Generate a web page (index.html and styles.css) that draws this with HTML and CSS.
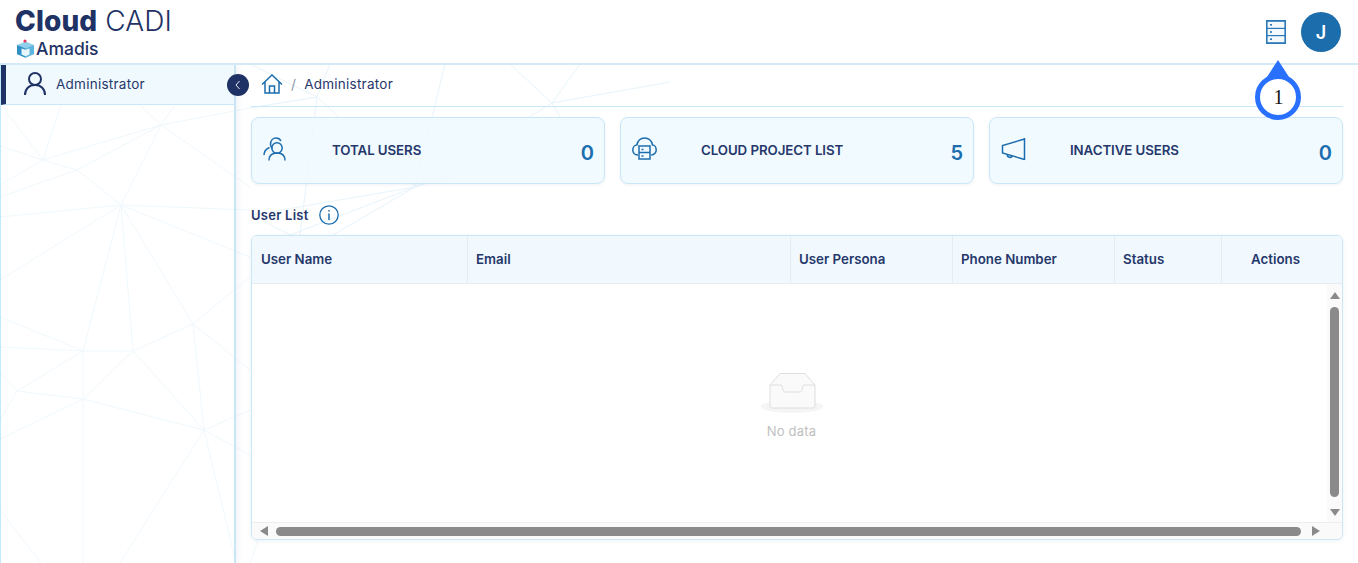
FILE: index.html
```html
<!DOCTYPE html>
<html lang="en">
<head>
<meta charset="utf-8">
<title>Cloud CADI</title>
<link rel="stylesheet" href="styles.css">
</head>
<body>
<svg class="mesh" width="1358" height="563" viewBox="0 0 1358 563" aria-hidden="true">
  <path d="M61 105L43 160L3 107M43 160L161 125L77 170L43 160M77 170L0 197M43 160L0 185M43 160L0 146M161 125L250 108L317 97M161 125L175 105M161 125L140 105M161 125L121 205L77 170M121 205L0 217M121 205L0 280M121 205L83 351M121 205L133 351M121 205L193 324M121 205L250 210M121 205L250 257M161 125L250 187M83 351L133 351L193 324L250 277M83 351L0 317M83 351L0 347M83 351L17 391L83 399L83 563M83 351L83 399L133 351L204 430L193 324M83 399L204 430L120 563M83 399L0 439M17 391L0 372M17 391L0 420M0 510L41 563M204 430L236 563M204 430L250 455M204 430L250 410M193 324L250 370M258 540L250 563"/>
  <path class="mesh-main" d="M317 97L330 64M317 97L250 108M317 97L415 187M317 97L300 235M415 187L445 64M415 187L552 103L580 64M552 103L510 64M552 103L670 82M552 103L573 138L415 187M415 187L252 215M415 187L333 235M415 187L290 235M290 235L252 215M317 97L250 64"/>
</svg>

<header class="topbar">
  <div class="brand">
    <div class="brand-name"><b>Cloud</b> CADI</div>
    <div class="brand-sub">
      <svg width="19" height="19" viewBox="0 0 19 19"><path d="M9.500 2.500L18 6v9l-8.500 3.800L1 15V6z" fill="#8fd0ea"/><path d="M1 6l8.500 3.500v9.300L1 15z" fill="#2d8fc4"/><path d="M18 6L9.500 9.500v9.300L18 15z" fill="#5fb5dd"/><path d="M5.500 9.500v6l4 1.800v-6.500zM13.500 9.500v6l-4 1.800v-6.500z" fill="#e6f6fc"/><circle cx="9" cy="2" r="1.600" fill="#e8345f"/></svg>
      <span>Amadis</span>
    </div>
  </div>
  <div class="top-actions">
    <svg class="server" width="20" height="24" viewBox="0 0 20 24"><rect width="20" height="24" fill="#2a78b8"/><rect x="1.600" y="1.800" width="16.800" height="6" fill="#f3f9fd"/><rect x="1.600" y="9" width="16.800" height="6" fill="#f3f9fd"/><rect x="1.600" y="16.200" width="16.800" height="6" fill="#f3f9fd"/><rect x="4" y="4" width="2" height="1.600" fill="#2a78b8"/><rect x="4" y="11.200" width="2" height="1.600" fill="#2a78b8"/><rect x="4" y="18.400" width="2" height="1.600" fill="#2a78b8"/></svg>
    <div class="avatar">J</div>
  </div>
</header>

<div class="shell">
  <aside class="sidebar">
    <div class="side-item">
      <svg width="24" height="25" viewBox="0 0 24 25" fill="none" stroke="#1f3265" stroke-width="2"><circle cx="12" cy="8" r="6"/><path d="M2 24c0-6 4-10 10-10s10 4 10 10"/></svg>
      <span>Administrator</span>
    </div>
    <div class="collapse"><svg width="8" height="10" viewBox="0 0 8 10" fill="none" stroke="#fff" stroke-width=".9"><path d="M5.500 1L2 5l3.500 4"/></svg></div>
  </aside>

  <main class="main">
    <nav class="crumbs">
      <svg width="22" height="20" viewBox="0 0 22 20" fill="none" stroke="#1c6dae" stroke-width="1.500"><path d="M1 10.500L11 1l10 9.500M4 8v11h14V8M8.500 19v-7h5v7"/></svg>
      <span class="sep">/</span>
      <span>Administrator</span>
    </nav>

    <section class="cards">
      <div class="card">
        <svg width="25" height="24" viewBox="0 0 25 24" fill="none" stroke="#1c6dae" stroke-width="1.500"><circle cx="14" cy="11" r="5.200"/><path d="M6 23.500c0-5 3-7.500 8-7.500s8 2.500 8 7.500M7.500 7.500C7.500 3.500 10 1 13 1c2 0 4 1 5 3M7.500 7.500c0 2 1 3 2 4M1 18c0-4 2-6 5.500-7.500"/></svg>
        <span class="card-title">TOTAL USERS</span>
        <span class="card-value">0</span>
      </div>
      <div class="card">
        <svg width="25" height="24" viewBox="0 0 25 24" fill="none" stroke="#1c6dae" stroke-width="1.500"><path d="M6 18C2 18 .8 15 .8 13c0-3 2-5 4-5C6 3 9 1 12.500 1s7 2 8 7c2 0 3.700 2 3.700 5 0 2-1.500 5-5 5"/><rect x="7" y="9" width="11" height="13"/><path d="M7 15.500h11M9.500 12.500h2M9.500 19h2"/></svg>
        <span class="card-title">CLOUD PROJECT LIST</span>
        <span class="card-value">5</span>
      </div>
      <div class="card">
        <svg width="25" height="24" viewBox="0 0 25 24" fill="none" stroke="#1c6dae" stroke-width="1.500"><path d="M23.500 1v22M23.500 2L1.500 8.500V16l22 6.500M6 17.500a3 3 0 0 0 5.500 1.500"/></svg>
        <span class="card-title">INACTIVE USERS</span>
        <span class="card-value">0</span>
      </div>
    </section>

    <div class="list-head">
      <span>User List</span>
      <svg width="20" height="20" viewBox="0 0 20 20" fill="none" stroke="#1c6dae" stroke-width="1.300"><circle cx="10" cy="10" r="9.200"/><path d="M10 8.500v6.500" stroke-width="1.500"/><path d="M10 5v1.600" stroke-width="1.500"/></svg>
    </div>

    <section class="table">
      <div class="thead">
        <div class="th">User Name</div>
        <div class="th">Email</div>
        <div class="th">User Persona</div>
        <div class="th">Phone Number</div>
        <div class="th">Status</div>
        <div class="th th-last">Actions</div>
      </div>
      <div class="tbody">
        <div class="empty">
          <svg width="64" height="41" viewBox="0 0 64 41"><ellipse cx="32" cy="33.500" rx="31" ry="6.500" fill="#f5f5f5"/><path d="M10 12L20 .5h25L55 12v21a2 2 0 0 1-2 2H12a2 2 0 0 1-2-2z" fill="#fafafa" stroke="#dedede"/><path d="M10 12h11c2 0 1 7 4 7h15c3 0 2-7 4-7h11" fill="none" stroke="#dedede"/></svg>
          <span>No data</span>
        </div>
        <div class="vbar">
          <i class="arrow up"></i>
          <i class="vthumb"></i>
          <i class="arrow down"></i>
        </div>
      </div>
      <div class="hbar">
        <i class="arrow left"></i>
        <i class="hthumb"></i>
        <i class="arrow right"></i>
      </div>
    </section>
  </main>
</div>

<div class="marker"><span>1</span></div>
</body>
</html>
```
FILE: styles.css
```css
* { box-sizing: border-box; }
html, body { margin: 0; height: 563px; overflow: hidden; background: #fff; }
body { font-family: Inter, "Noto Sans", sans-serif; color: #26386b; position: relative; display: flex; flex-direction: column; }

.mesh { position: absolute; left: 0; top: 0; z-index: 0; fill: none; stroke: #eff8fd; stroke-width: 1; }
.mesh-main { stroke: #e7f4fb; }

.topbar { position: relative; z-index: 2; height: 65px; flex: none; background: #fff; border-bottom: 2px solid #d3eaf6; display: flex; justify-content: space-between; padding: 5px 17px 0 15px; }
.brand-name { font-size: 28px; line-height: 33px; font-weight: 300; color: #1f3265; letter-spacing: .1px; white-space: nowrap; }
.brand-name b { font-weight: 800; }
.brand-sub { display: flex; align-items: center; gap: 1px; padding-left: 1px; height: 20px; font-size: 17.500px; font-weight: 500; color: #1f3265; }
.top-actions { display: flex; align-items: center; gap: 15px; padding-bottom: 5px; margin-top: 1px; }
.avatar { width: 40px; height: 40px; border-radius: 50%; background: #1c6dab; color: #fff; font-weight: 600; font-size: 18px; display: flex; align-items: center; justify-content: center; }

.shell { position: relative; z-index: 1; flex: 1; display: flex; min-height: 0; }
.sidebar { position: relative; width: 236px; flex: none; border-left: 1px solid #bfe9fd; border-right: 2px solid #c8e6f5; box-shadow: 3px 0 5px rgba(30, 60, 110, .05); }
.side-item { height: 40px; background: #f0f9fe; border-left: 5px solid #1f3265; border-bottom: 1px solid #c8e9fa; padding: 0 0 2px 17px; display: flex; align-items: center; gap: 9px; font-size: 13.500px; letter-spacing: .25px; }
.collapse { position: absolute; right: -15px; top: 9px; width: 22px; height: 22px; border-radius: 50%; background: #1f3265; display: flex; align-items: center; justify-content: center; }

.main { flex: 1; min-width: 0; padding: 0 15px; display: flex; flex-direction: column; }
.crumbs { height: 42px; flex: none; border-bottom: 1px solid #c8e9fa; padding: 0 0 3px 10px; display: flex; align-items: center; font-size: 13.500px; letter-spacing: .25px; }
.sep { margin: 0 8px; color: #8b93a8; }

.cards { display: grid; grid-template-columns: repeat(3, 1fr); gap: 15px; margin-top: 10px; flex: none; }
.card { height: 67px; border: 1px solid #c9e7f6; border-radius: 8px; background: rgba(238, 249, 255, .82); box-shadow: 0 1px 3px rgba(30, 80, 130, .08); padding: 0 10px 0 11px; display: flex; align-items: center; }
.card svg { flex: none; margin-bottom: 3px; }
.card-title { margin-left: 44px; flex: 1; font-size: 13.300px; font-weight: 600; letter-spacing: -.08px; margin-bottom: 1px; }
.card-value { font-size: 20px; font-weight: 600; color: #1c6dae; margin-top: 5px; }

.list-head { height: 51px; flex: none; display: flex; align-items: center; gap: 10px; padding-top: 20px; padding-bottom: 10px; font-size: 13px; font-weight: 600; letter-spacing: .25px; }

.table { height: 305px; flex: none; border: 1.500px solid #c9e7f6; border-radius: 6px; background: #fff; box-shadow: 0 1px 4px rgba(30, 80, 130, .08); display: flex; flex-direction: column; overflow: hidden; }
.thead { height: 48px; flex: none; display: grid; grid-template-columns: 216px 323px 162px 162px 107px 1fr; background: #f1f9fe; border-bottom: 1px solid #e3edf3; font-size: 13.300px; font-weight: 600; }
.th { display: flex; align-items: center; padding: 0 0 2px 8px; border-right: 1px solid #e3edf3; }
.th:first-child { padding-left: 9px; }
.th-last { justify-content: center; padding: 0 13px 2px 0; border-right: 0; }

.tbody { flex: 1; display: flex; min-height: 0; }
.empty { flex: 1; display: flex; flex-direction: column; align-items: center; padding: 89px 0 0 4px; gap: 9px; font-size: 13px; letter-spacing: .2px; font-weight: 400; color: #bfbfbf; }
.vbar { width: 15px; flex: none; background: #fafafa; display: flex; flex-direction: column; align-items: center; padding: 8px 0 6px; }
.vthumb { width: 9px; flex: 1; margin: 8px 0 12px; border-radius: 5px; background: #8a8a8a; }
.hbar { height: 17px; flex: none; background: #fafafa; border-top: 1px solid #eee; display: flex; align-items: center; padding: 0 22px 0 8px; }
.hthumb { flex: 1; height: 9px; margin: 0 11px 0 8px; border-radius: 5px; background: #8a8a8a; }

.arrow { flex: none; width: 0; height: 0; border-style: solid; border-color: transparent; }
.up { border-width: 0 5px 7px; border-bottom-color: #8a8a8a; }
.down { border-width: 7px 5px 0; border-top-color: #8a8a8a; }
.left { border-width: 5px 8px 5px 0; border-right-color: #8a8a8a; }
.right { border-width: 5px 0 5px 8px; border-left-color: #8a8a8a; }

.marker { position: absolute; z-index: 5; left: 1255px; top: 74px; width: 46px; height: 46px; border: 5px solid #2970ff; border-radius: 50%; background: #fff; display: flex; align-items: center; justify-content: center; font-family: "Liberation Serif", serif; font-size: 20px; color: #111; padding-left: 1px; }
.marker::before { content: ""; position: absolute; left: 50%; top: -19px; margin-left: -11px; border-style: solid; border-width: 0 11px 17px; border-color: transparent transparent #2970ff; }
```
